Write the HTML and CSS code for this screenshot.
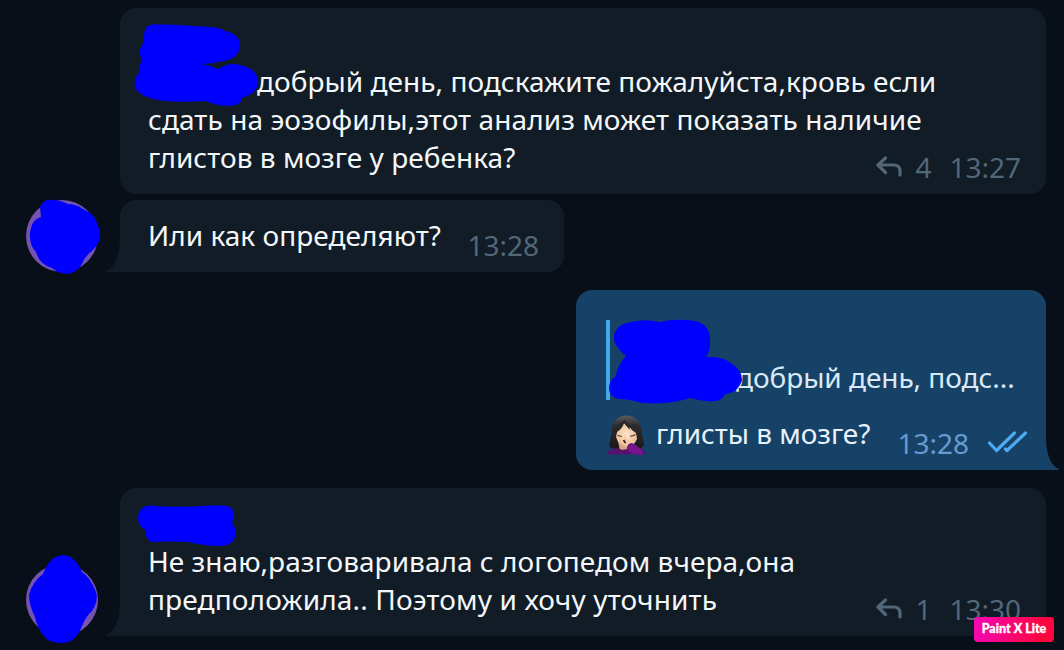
FILE: index.html
```html
<!DOCTYPE html>
<html lang="ru">
<head>
<meta charset="utf-8">
<title>Чат</title>
<link rel="stylesheet" href="styles.css">
</head>
<body>
<main class="chat">
  <article class="row">
    <div class="bubble bubble-first">
      <p class="text"><span class="line line-indent">добрый день, подскажите пожалуйста,кровь если</span><span class="line line-wide">сдать на эозофилы,этот анализ может показать наличие</span><span class="line">глистов в мозге у ребенка?</span></p>
      <div class="meta"><svg class="reply" viewBox="0 0 28 22"><path d="M10.500 2 3 9l7.500 7.500M3 9H18.500q6.500 0 6.500 6V19"/></svg><span class="count">4</span><time>13:27</time></div>
      <svg class="scribble" width="160" height="110" viewBox="120 10 160 110"><path d="M150 25C160 24 180 25 208 27Q219 27 225 31Q240 34 240 46Q239 58 224 61Q211 64 201 64Q210 65 218 69Q230 62 240 65Q258 69 258 82Q258 93 242 98Q241 105 233 105.500Q218 107 206 101Q176 103 158 100Q134.500 95 134.500 84Q135 76 139 73Q138 66 142 61Q137 50 144 42Q143 26 150 25Z"/></svg>
    </div>
  </article>

  <article class="row">
    <svg class="avatar" viewBox="20 190 84 90"><circle class="disc" cx="62" cy="236" r="36"/><path class="paint" d="M48 200Q57 199 68 204Q76 204 83 209Q94 214 96 221Q101 230 100 240Q97 246 93 250Q84 257 82 264Q77 273 67 274Q57 273 52 268Q39 264 36 252Q29 245 30 232Q32 219 41 217L40 207Q42 201 48 200Z"/></svg>
    <div class="bubble bubble-second">
      <svg class="tail" viewBox="0 0 16 28"><path d="M16 0H14.500Q13 22 1 27V28H16Z"/></svg>
      <p class="text"><span class="line">Или как определяют?</span></p>
      <div class="meta"><time>13:28</time></div>
    </div>
  </article>

  <article class="row row-out">
    <div class="bubble bubble-out">
      <svg class="tail tail-out" viewBox="0 0 16 28"><path d="M0 0H1Q3 23 14 27V28H0Z"/></svg>
      <blockquote class="quote"><span class="line">добрый день, подс...</span></blockquote>
      <div class="text answer">
        <svg class="emoji" viewBox="0 0 40 42">
          <defs>
            <linearGradient id="hair" x2="0" y2="1"><stop stop-color="#5b5b5c"/><stop offset=".3" stop-color="#2e2c2d"/><stop offset="1" stop-color="#181719"/></linearGradient>
            <radialGradient id="skin"><stop stop-color="#ffe6cb"/><stop offset="1" stop-color="#edbd98"/></radialGradient>
          </defs>
          <path fill="url(#hair)" d="M20 1.500C10 2 6 9 5.500 17C5 24 3 28 3.500 33L12 36H32L38 32Q38 27 36 20C35 8 30 1.500 20 1.500Z"/>
          <path fill="#dca57e" d="M12 27H25V37H14Z"/>
          <path fill="url(#skin)" d="M11 17Q15 15 18 9Q22 14 30 16L31 25Q29 31 21 32.500Q12 31 10 23Z"/>
          <path fill="#2a272a" d="M9 24Q8 13 16 8L19 6Q23 10 24 16Q21 13 18 9Q16 15 11 18ZM19 7 28 14 26 9Q33 13 32 25L30 19Q25 16 22 11Z"/>
          <path fill="none" stroke="#654536" stroke-width="1.200" d="M11.500 21.500 16 22.500M24 22Q27 22.500 29.500 20.500"/>
          <path fill="#f7c9a2" d="M18 19Q20 22 21 26L26 27Q29 30 28 33L24 35L20 32Z"/>
          <path fill="none" stroke="#3e241d" stroke-width="1.800" d="M17.500 26 19.500 29"/>
          <path fill="#56106e" d="M.500 40.500Q2 35 11 34Q16 37 21 35Q21 29 26 29L32 33Q39 35 39.500 40.500Z"/>
          <path fill="#75158d" d="M21.500 34Q22 29 28 30L36 36L38 40.500H29Q21 38 21.500 34Z"/>
        </svg>
        <span class="line">глисты в мозге?</span>
      </div>
      <div class="meta meta-out"><time>13:28</time><svg class="checks" viewBox="0 0 42 24"><path d="M2.500 12 9.500 19.500 27.500 2M20 19.500 38.500 2M18.500 18l1.500 1.500"/></svg></div>
      <svg class="scribble scribble-out" width="150" height="100" viewBox="600 310 150 100"><path d="M614 335Q617 325 627 323Q642 318 660 322Q675 318 696 321Q709 325 710 338Q711 351 706 357Q724 356 732 364Q742 370 742 380Q738 393 725 394Q722 402 710 401.500Q700 401 690 398Q670 405 642 403Q629 399 618 399Q609 396 609 388Q609 381 616 376Q617 366 626 356Q616 348 614 340Z"/></svg>
    </div>
  </article>

  <article class="row">
    <svg class="avatar avatar-last" viewBox="20 550 84 98"><circle class="disc" cx="62" cy="600" r="36"/><path class="paint" d="M62 555Q75 555 82 572Q90 577 96 592Q99 600 92 611Q86 616 82 626Q76 642 64 643Q49 644 43 635Q37 627 35 617Q29 605 29 595Q32 582 43 574Q49 557 62 555Z"/></svg>
    <div class="bubble bubble-last">
      <svg class="tail" viewBox="0 0 16 28"><path d="M16 0H14.500Q13 22 1 27V28H16Z"/></svg>
      <p class="text"><span class="line">Не знаю,разговаривала с логопедом вчера,она</span><span class="line line-wider">предположила.. Поэтому и хочу уточнить</span></p>
      <div class="meta"><svg class="reply" viewBox="0 0 28 22"><path d="M10.500 2 3 9l7.500 7.500M3 9H18.500q6.500 0 6.500 6V19"/></svg><span class="count">1</span><time>13:30</time></div>
      <svg class="scribble scribble-last" width="110" height="55" viewBox="130 500 110 55"><path d="M149 505.500Q178 508 210 505.500H224Q234 506 234 516L232 523Q237 529 235 537Q233 545 222 546Q204 546 188 542Q166 541 153 542Q145 540 145 530Q138 526 138 517Q139 507 149 505.500Z"/></svg>
    </div>
  </article>
  <div class="watermark">Paint X Lite</div>
</main>
</body>
</html>
```

FILE: styles.css
```css
* { box-sizing: border-box; }
body { margin: 0; background: #090f18; font-family: "Noto Sans", sans-serif; }
.chat {
  position: relative;
  width: 1064px;
  height: 650px;
  padding-top: 8px;
  overflow: hidden;
  display: flex;
  flex-direction: column;
}
.row { position: relative; display: flex; flex: none; padding: 0 18px 0 120px; }
.row-out { justify-content: flex-end; }
.bubble {
  position: relative;
  border-radius: 16px;
  background: #111c26;
  color: #f4f7fa;
  font-size: 28px;
  line-height: 38px;
}
.bubble-first { width: 926px; height: 186px; padding: 54px 28px 0; margin-bottom: 6px; }
.bubble-second { width: 444px; height: 72px; padding: 16px 28px 0; margin-bottom: 18px; border-bottom-left-radius: 0; }
.bubble-out { width: 470px; height: 180px; padding: 30px 30px 0; margin-bottom: 18px; border-bottom-right-radius: 0; background: #174267; }
.bubble-last { width: 926px; height: 148px; padding: 54px 28px 0; border-radius: 16px 16px 0 0; }
.text { margin: 0; }
.line { display: block; width: max-content; white-space: nowrap; letter-spacing: .035px; }
.line-wide { letter-spacing: .085px; }
.line-wider { letter-spacing: .14px; }
.line-indent { margin-left: 109px; }
.meta {
  position: absolute;
  right: 25px;
  bottom: 8px;
  display: flex;
  align-items: center;
  color: #536779;
  line-height: 38px;
}
.count { margin: 0 18px 0 12px; }
.reply { width: 28px; height: 22px; fill: none; stroke: currentColor; stroke-width: 3.200; stroke-linejoin: round; stroke-linecap: round; }
.meta-out { right: 17px; color: #679bd0; }
.checks { width: 42px; height: 24px; margin-left: 18px; fill: none; stroke: #4dabf4; stroke-width: 3.200; stroke-linecap: round; stroke-linejoin: round; }
.quote { height: 80px; margin: 0; padding: 38px 0 0 126px; border-left: 4px solid #43a9ec; color: #d9e9f7; }
.quote .line, .answer .line { letter-spacing: -.05px; }
.answer { display: flex; margin-top: 14px; gap: 10px; color: #e7f2fb; }
.emoji { width: 40px; height: 42px; flex: none; }
.tail { position: absolute; left: -15px; bottom: 0; width: 16px; height: 28px; fill: #111c26; }
.tail-out { left: auto; right: -15px; fill: #174267; }
.avatar { position: absolute; left: 20px; top: -10px; width: 84px; height: 90px; }
.avatar-last { top: 62px; height: 98px; }
.disc { fill: #7454b0; }
.paint, .scribble { fill: #00f; }
.scribble { position: absolute; left: 0; top: 2px; }
.scribble-out { left: 24px; top: 20px; }
.scribble-last { left: 10px; top: 12px; }
.watermark {
  position: absolute;
  right: 10px;
  bottom: 8px;
  width: 80px;
  height: 25px;
  border-radius: 4px;
  background: linear-gradient(100deg, #f607b6, #fb063d 85%);
  color: #fff;
  font: 900 12.500px/24px Lato, sans-serif;
  -webkit-text-stroke: .3px #fff;
  text-align: center;
  white-space: nowrap;
}
```
